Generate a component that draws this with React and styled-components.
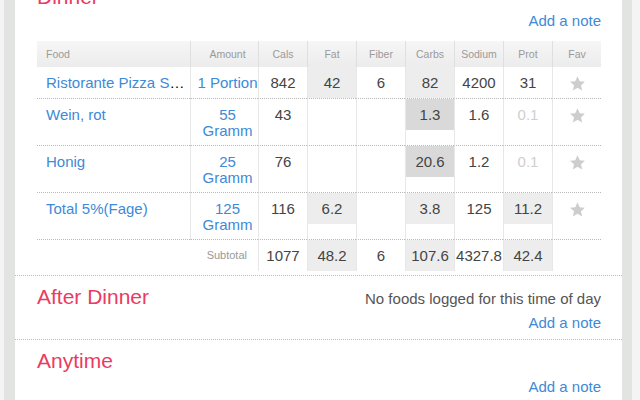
import React from "react";
import styled, { createGlobalStyle } from "styled-components";

const GlobalStyle = createGlobalStyle`
  body {
    margin: 0;
    background: #f3f4f3;
    font-family: "Liberation Sans", Arial, sans-serif;
    overflow: hidden;
  }
`;

const Frame = styled.div`
  margin: -24px 8px 0 4px;
  padding: 0 10px 0 11px;
  background: #e2e4e2;
  min-height: 440px;
`;

const Panel = styled.div`
  background: #fff;
  min-height: 440px;
`;

const Section = styled.section`
  padding: 9px 21px ${props => (props.table ? "4px" : "6px")} 22px;
  border-bottom: 1px dotted #b9b9b9;
`;

const HeadRow = styled.div`
  display: flex;
  align-items: baseline;
  justify-content: space-between;
`;

const MealTitle = styled.h2`
  margin: 0;
  font-size: 21px;
  line-height: 24px;
  font-weight: normal;
  color: #ea3b63;
`;

const EmptyNote = styled.span`
  font-size: 15px;
  color: #555;
`;

const NoteRow = styled.div`
  display: flex;
  justify-content: flex-end;
  line-height: 20px;
  margin-top: ${props => (props.table ? "2px" : "4px")};
  margin-bottom: ${props => (props.table ? "10px" : "0")};
`;

const Link = styled.a`
  font-size: 15px;
  line-height: inherit;
  color: #3d8ad8;
  text-decoration: none;
  cursor: pointer;
`;

const Table = styled.table`
  width: 564px;
  table-layout: fixed;
  border-collapse: separate;
  border-spacing: 0;
`;

const Th = styled.th`
  height: 26px;
  padding: 0;
  padding-left: ${props => (props.left ? "9px" : props.amount ? "6px" : "0")};
  text-align: ${props => (props.left ? "left" : "center")};
  font-size: 10.5px;
  font-weight: normal;
  color: #9a9a9a;
  background: linear-gradient(#f6f6f6, #ececec);
  border-left: ${props => (props.first ? "none" : "1px solid #dfdfdf")};
`;

const Td = styled.td`
  padding: 0;
  vertical-align: top;
  border-left: ${props => (props.first ? "none" : "1px solid #e7e7e7")};
  border-bottom: ${props => (props.last ? "none" : "1px dotted #b9b9b9")};
`;

const FoodCell = styled(Td)`
  padding: 8px 4px 6px 9px;
  white-space: nowrap;
  overflow: hidden;
  text-overflow: ellipsis;
  font-size: 15px;
  line-height: 16px;
`;

const AmountCell = styled(Td)`
  padding: 8px 0 6px 6px;
  text-align: center;
  font-size: 15px;
  line-height: 16px;
`;

const SubLabel = styled(Td)`
  padding-right: 11px;
  text-align: right;
  font-size: 11px;
  line-height: 31px;
  color: #999;
`;

const Value = styled.div`
  height: 31px;
  line-height: 31px;
  text-align: center;
  font-size: 15px;
  white-space: nowrap;
  color: ${props => (props.faint ? "#cfcfcf" : "#444")};
  background: ${props =>
    props.shade === "dark" ? "#d9d9d9" : props.shade === "light" ? "#ededed" : "transparent"};
`;

const StarBox = styled.div`
  height: 31px;
  display: flex;
  align-items: center;
  justify-content: center;
  padding-top: 2px;
  box-sizing: border-box;
`;

const Star = () => (
  <svg width="17" height="17" viewBox="0 0 24 24">
    <path
      d="M12 1.8l3.1 6.9 7.4.7-5.6 5 1.7 7.4L12 17.9l-6.6 3.9 1.7-7.4-5.6-5 7.4-.7z"
      fill="#cdcdcd"
    />
  </svg>
);

const columns = ["Cals", "Fat", "Fiber", "Carbs", "Sodium", "Prot"];
const widths = [153, 68, 49, 49, 49, 49, 49, 49, 49];

const foods = [
  {
    name: "Ristorante Pizza Speciale",
    amount: "1 Portion",
    values: [842, { v: 42, shade: "light" }, 6, { v: 82, shade: "light" }, 4200, 31],
  },
  {
    name: "Wein, rot",
    amount: "55 Gramm",
    values: [43, "", "", { v: 1.3, shade: "dark" }, 1.6, { v: 0.1, faint: true }],
  },
  {
    name: "Honig",
    amount: "25 Gramm",
    values: [76, "", "", { v: 20.6, shade: "dark" }, 1.2, { v: 0.1, faint: true }],
  },
  {
    name: "Total 5%(Fage)",
    amount: "125 Gramm",
    values: [116, { v: 6.2, shade: "light" }, "", { v: 3.8, shade: "light" }, 125, { v: 11.2, shade: "light" }],
  },
];

const subtotal = [
  1077,
  { v: 48.2, shade: "light" },
  6,
  { v: 107.6, shade: "light" },
  4327.8,
  { v: 42.4, shade: "light" },
];

const renderValue = (val, i, last) => {
  const cell = typeof val === "object" ? val : { v: val };
  return (
    <Td key={i} last={last}>
      <Value shade={cell.shade} faint={cell.faint}>
        {cell.v}
      </Value>
    </Td>
  );
};

const FoodTable = () => (
  <Table>
    <colgroup>
      {widths.map((w, i) => (
        <col key={i} style={{ width: w }} />
      ))}
    </colgroup>
    <thead>
      <tr>
        <Th left first>Food</Th>
        <Th amount>Amount</Th>
        {columns.map(c => (
          <Th key={c}>{c}</Th>
        ))}
        <Th>Fav</Th>
      </tr>
    </thead>
    <tbody>
      {foods.map(food => (
        <tr key={food.name}>
          <FoodCell first>
            <Link>{food.name}</Link>
          </FoodCell>
          <AmountCell>
            <Link>{food.amount}</Link>
          </AmountCell>
          {food.values.map((val, i) => renderValue(val, i))}
          <Td>
            <StarBox>
              <Star />
            </StarBox>
          </Td>
        </tr>
      ))}
      <tr>
        <SubLabel colSpan={2} first last>
          Subtotal
        </SubLabel>
        {subtotal.map((val, i) => renderValue(val, i, true))}
        <Td last />
      </tr>
    </tbody>
  </Table>
);

const Meal = ({ title, empty, children }) => (
  <Section table={!!children}>
    <HeadRow>
      <MealTitle>{title}</MealTitle>
      {empty && <EmptyNote>No foods logged for this time of day</EmptyNote>}
    </HeadRow>
    <NoteRow table={!!children}>
      <Link>Add a note</Link>
    </NoteRow>
    {children}
  </Section>
);

const App = () => (
  <>
    <GlobalStyle />
    <Frame>
      <Panel>
        <Meal title="Dinner">
          <FoodTable />
        </Meal>
        <Meal title="After Dinner" empty />
        <Meal title="Anytime" />
      </Panel>
    </Frame>
  </>
);

export default App;
